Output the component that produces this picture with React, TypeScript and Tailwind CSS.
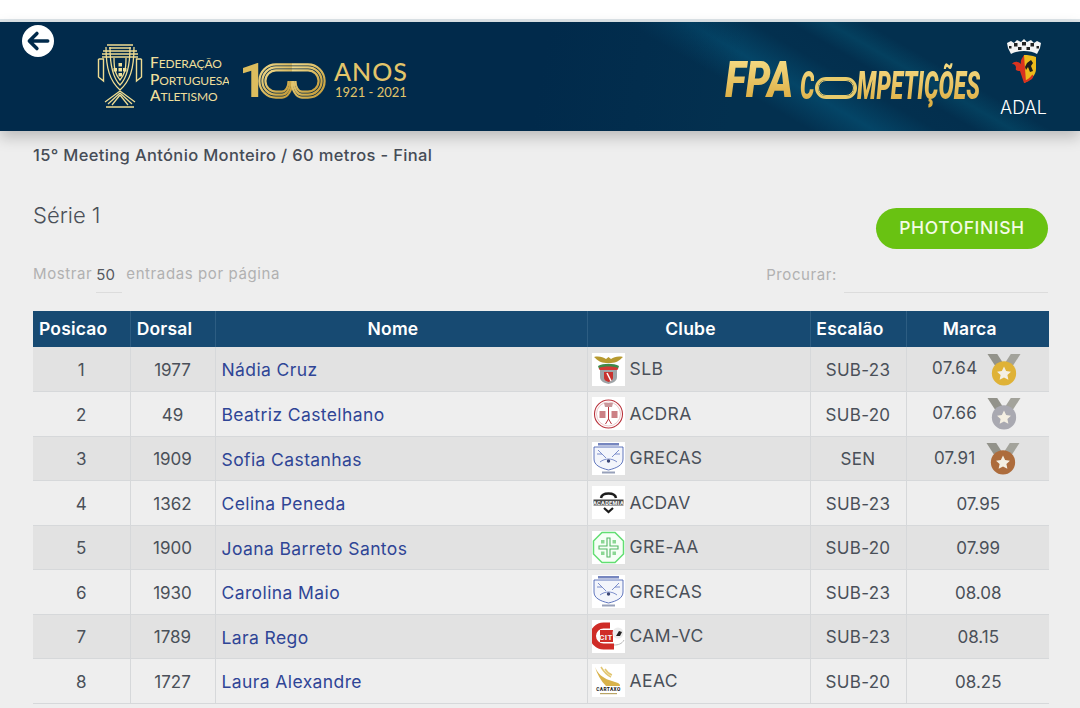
import type { ReactNode } from "react";

const FONT = "font-['Inter','Open_Sans',sans-serif]";

type MedalKind = "gold" | "silver" | "bronze";

type Row = {
  pos: number;
  dorsal: number;
  nome: string;
  clube: string;
  logo: ReactNode;
  escalao: string;
  marca: string;
  medal?: MedalKind;
};

const MEDAL_COLORS: Record<MedalKind, string> = {
  gold: "#dfb237",
  silver: "#a9a9b1",
  bronze: "#ad6c3c",
};

function Medal({ kind }: { kind: MedalKind }) {
  return (
    <svg viewBox="0 0 36 34" className="h-[33px] w-[36px]">
      <path d="M1 1h10l9 14-6 6z" fill="#93938b" />
      <path d="M35 1H25l-9 14 6 6z" fill="#a3a39b" />
      <circle cx="18" cy="21" r="12.5" fill={MEDAL_COLORS[kind]} />
      <path
        d="M18 14l2.2 4.6 5 .6-3.7 3.4 1 5L18 25.200l-4.500 2.400 1-5-3.700-3.400 5-.6z"
        fill="#f4efe2"
      />
    </svg>
  );
}

function LogoBox({ children }: { children: ReactNode }) {
  return (
    <span className="flex h-[33px] w-[33px] shrink-0 items-center justify-center bg-white">
      <svg viewBox="0 0 33 33" className="h-[33px] w-[33px]">
        {children}
      </svg>
    </span>
  );
}

const SlbLogo = (
  <LogoBox>
    <path d="M2 4c5-1 9 0 12 2l2.500-2 2.500 2c3-2 7-3 12-2-3 3-7 6-12 6h-5C9 10 5 7 2 4z" fill="#b79a2f" />
    <path d="M6 13c5-3 16-3 21 0l-1 3H7z" fill="#3f8a4a" />
    <path d="M7 15c5-2 14-2 19 0l-.5 2h-18z" fill="#d33a35" />
    <path d="M8 17h17v7c0 4-4 6-8.500 7C12 30 8 28 8 24z" fill="#9fa5a8" />
    <path d="M12 19h9v6c0 2-2 3-4.500 4-2.500-1-4.500-2-4.500-4z" fill="#c8322e" />
    <path d="M15 20l4 8" stroke="#fff" strokeWidth="1.500" />
  </LogoBox>
);

const AcdraLogo = (
  <LogoBox>
    <circle cx="16.500" cy="17" r="14" fill="#fff" stroke="#b9333c" strokeWidth="1.100" />
    <circle cx="16.500" cy="17" r="12" fill="none" stroke="#d9a0a4" strokeWidth="0.600" />
    <path d="M12 6h9l-1 4h-7z" fill="#c9979b" />
    <rect x="7.500" y="14" width="6" height="7" fill="#cc8085" />
    <rect x="19.500" y="14" width="6" height="7" fill="#cc8085" />
    <path d="M16.500 10v12l-3 5M16.500 22l3 5" stroke="#b9333c" strokeWidth="1" fill="none" />
  </LogoBox>
);

const GrecasLogo = (
  <LogoBox>
    <rect x="6" y="1" width="21" height="2.500" fill="#7686bf" />
    <path d="M2 5h29v12c0 6-6 9-14.500 11C8 26 2 23 2 17z" fill="#f3f5fb" stroke="#3a55ad" strokeWidth="0.800" />
    <path d="M6 8l8 8M27 8l-7 7M8 20c5-4 12-4 17 0M5 12h5M23 12h5" stroke="#6f83c6" strokeWidth="0.900" fill="none" />
    <circle cx="16.500" cy="19" r="1.700" fill="#3b4675" />
    <rect x="10" y="29.500" width="13" height="2" fill="#98a1ba" />
  </LogoBox>
);

const AcdavLogo = (
  <LogoBox>
    <path d="M9 12c1-6 14-6 15 0" stroke="#1c1c1c" strokeWidth="2.500" fill="none" />
    <rect x="1.500" y="13.500" width="30" height="6" fill="#4a4a4a" />
    <text x="16.500" y="18.500" textAnchor="middle" fontSize="5.500" fontWeight="800" fill="#f2f2f2" fontFamily="Roboto, sans-serif">
      ACADEMIA
    </text>
    <path d="M12 22l4.500 4 4.500-4" stroke="#1c1c1c" strokeWidth="2.200" fill="none" />
  </LogoBox>
);

const GreLogo = (
  <LogoBox>
    <path d="M10 1.500h13l8.500 8.500v13L23 31.500H10L1.500 23V10z" fill="#f6fff6" stroke="#62de72" strokeWidth="1.500" />
    <path d="M15 7h3v8h8v3h-8v8h-3v-8H7v-3h8z" fill="none" stroke="#55b765" strokeWidth="1.100" />
    <rect x="9" y="9" width="3.500" height="3.500" fill="#8bd894" />
    <rect x="20.500" y="9" width="3.500" height="3.500" fill="#8bd894" />
    <rect x="9" y="20.500" width="3.500" height="3.500" fill="#8bd894" />
    <rect x="20.500" y="20.500" width="3.500" height="3.500" fill="#8bd894" />
  </LogoBox>
);

const CamLogo = (
  <LogoBox>
    <path d="M18 5.500H11.500a10.500 10.500 0 0 0 0 21H22" fill="none" stroke="#cf2c27" strokeWidth="6" />
    <rect x="8" y="10" width="13" height="12" fill="#cf2c27" />
    <text x="14" y="20" textAnchor="middle" fontSize="8" fontWeight="700" fill="#f5f5f5" fontFamily="Roboto, sans-serif">
      CIT
    </text>
    <circle cx="26" cy="13" r="5.500" fill="#ececec" />
    <path d="M24 16l3-5 3 1-2 4z" fill="#222" />
    <path d="M22 25c4 0 8-1 10-5" stroke="#bbb" strokeWidth="1" fill="none" />
  </LogoBox>
);

const AeacLogo = (
  <LogoBox>
    <path d="M3 3c3 7 8 11 14 13l9 3c2 1 3 3 1 3H14C9 17 5 10 3 3z" fill="#d9b24a" />
    <path d="M9 3c3 5 6 8 10 10M13 5c2 3 4 5 7 6" stroke="#e2c672" strokeWidth="1.500" fill="none" />
    <text x="16.500" y="27" textAnchor="middle" fontSize="4.800" fontWeight="800" fill="#222" fontFamily="Roboto, sans-serif">
      CARTAXO
    </text>
    <rect x="8" y="29" width="17" height="1.200" fill="#b9a465" />
  </LogoBox>
);

const ROWS: Row[] = [
  { pos: 1, dorsal: 1977, nome: "Nádia Cruz", clube: "SLB", logo: SlbLogo, escalao: "SUB-23", marca: "07.64", medal: "gold" },
  { pos: 2, dorsal: 49, nome: "Beatriz Castelhano", clube: "ACDRA", logo: AcdraLogo, escalao: "SUB-20", marca: "07.66", medal: "silver" },
  { pos: 3, dorsal: 1909, nome: "Sofia Castanhas", clube: "GRECAS", logo: GrecasLogo, escalao: "SEN", marca: "07.91", medal: "bronze" },
  { pos: 4, dorsal: 1362, nome: "Celina Peneda", clube: "ACDAV", logo: AcdavLogo, escalao: "SUB-23", marca: "07.95" },
  { pos: 5, dorsal: 1900, nome: "Joana Barreto Santos", clube: "GRE-AA", logo: GreLogo, escalao: "SUB-20", marca: "07.99" },
  { pos: 6, dorsal: 1930, nome: "Carolina Maio", clube: "GRECAS", logo: GrecasLogo, escalao: "SUB-23", marca: "08.08" },
  { pos: 7, dorsal: 1789, nome: "Lara Rego", clube: "CAM-VC", logo: CamLogo, escalao: "SUB-23", marca: "08.15" },
  { pos: 8, dorsal: 1727, nome: "Laura Alexandre", clube: "AEAC", logo: AeacLogo, escalao: "SUB-20", marca: "08.25" },
];

function Goblet() {
  return (
    <svg viewBox="0 0 46 64" className="h-[64px] w-[46px]" fill="none" stroke="#efdc92">
      <path d="M10 1h26M12 4h22M6 7h34M5 10h36M5 13h36" strokeWidth="1.300" />
      <path d="M1.500 15v18l5 4V15h-5M44.500 15v18l-5 4V15h5" strokeWidth="1.400" />
      <path d="M9 3c0 22 4 34 14 43C33 37 37 25 37 3M13 3c0 20 3 31 10 38 7-7 10-18 10-38M17 14c0 13 2 17 6 22 4-5 6-9 6-22" strokeWidth="1.300" />
      <path d="M21.500 19h3.500v3.500h-3.500zM16.500 24h3.500v3.500h-3.500zM26 24h3.500v3.500H26zM21.500 24h3.500v3.500h-3.500zM21.500 29h3.500v3.500h-3.500z" fill="#f1e29b" stroke="none" />
      <path d="M23 47L8 58M23 47l15 11M23 49L11 60M23 49l12 11M23 51l-8 10M23 51l8 10M9 63h28" strokeWidth="1.300" />
    </svg>
  );
}

const RING_RADII = [16.6, 13.6, 10.6];

function HundredRings() {
  return (
    <svg viewBox="0 0 68 36" className="h-[36px] w-[68px]" fill="none">
      <defs>
        <linearGradient id="gold100" x1="0" x2="1" y1="0" y2="1">
          <stop offset="0" stopColor="#f0d98a" />
          <stop offset="1" stopColor="#c49a35" />
        </linearGradient>
      </defs>
      <g stroke="url(#gold100)" strokeWidth="2.200">
        {RING_RADII.map((r) => (
          <g key={r}>
            <path d={`M34 ${18 - r}H18A${r} ${r} 0 0 0 18 ${18 + r}H24A${r * 0.62} ${r} 0 0 0 ${24 + r * 0.62} 18`} />
            <path d={`M34 ${18 - r}H50A${r} ${r} 0 0 1 50 ${18 + r}H44A${r * 0.62} ${r} 0 0 1 ${44 - r * 0.62} 18`} />
          </g>
        ))}
      </g>
    </svg>
  );
}

function AdalCrest() {
  return (
    <svg viewBox="0 0 36 44" className="h-[44px] w-[36px]">
      <path d="M1 4l4-2 3 2 3-3 4 2 3-3 3 3 4-2 3 3 3-2 4 2-1 5-3 6c-3-2-8-3-13-3s-10 1-13 3L2 9z" fill="#f4f4f4" />
      <path d="M8 4h3.500v3.500H8zM16 3h4v3.500h-4zM24.500 4H28v3.500h-3.500zM3 7h2.500v2.500H3zM12 8h3.500v3H12zM20.500 8H24v3h-3.500zM30.500 7H33v2.500h-2.500z" fill="#222" />
      <path d="M18 16c4 0 8 .6 12 2v12c0 6-5 11-12 14z" fill="#edbb1c" />
      <path d="M18 16c-1.500 3-4 5-3 9-3-3-7-3-9 0 3 0 4 2 4 4-1 2 1 3 4 3l4 12c1-1 2-1 2-1z" fill="#d9331f" />
      <path d="M26 40c-3 2-5 3-8 4v-2c3-1 6-3 8-6 2-1 1 3 0 4z" fill="#d9331f" />
      <path d="M21 24l4-3 2 3-2 3 2 5-3 1-2-5-2 3-1-3z" fill="#1d1d1d" />
    </svg>
  );
}

function FpaLogo() {
  return (
    <div className="flex items-center text-[#efdf9b]">
      <Goblet />
      <div className="mt-[6px] ml-[7px] flex w-[79px] flex-col font-['Lato',sans-serif] text-[12px] leading-[16.500px] tracking-[-0.1px] whitespace-nowrap">
        <span className="flex h-[16.500px] items-baseline overflow-hidden"><span className="text-[15.500px] leading-[16.500px] font-medium">F</span><span>EDERAÇÃO</span></span>
        <span className="flex h-[16.500px] items-baseline overflow-hidden"><span className="text-[15.500px] leading-[16.500px] font-medium">P</span><span>ORTUGUESA</span></span>
        <span className="flex h-[16.500px] items-baseline overflow-hidden"><span className="text-[15.500px] leading-[16.500px] font-medium">A</span><span>TLETISMO</span></span>
      </div>
      <div className="mt-[10px] ml-[10px] flex items-center">
        <span className="mr-[1px] w-[18px] font-['Roboto',sans-serif] text-[49px] leading-[36px] font-bold text-[#dcbd5e]">1</span>
        <HundredRings />
      </div>
      <div className="mt-[6px] ml-[8px] flex flex-col items-center">
        <span className="font-['Lato',sans-serif] text-[25px] leading-[26px] font-medium tracking-[1px] text-[#e3c56a]">ANOS</span>
        <span className="font-['Lato',sans-serif] text-[13px] leading-[16px] text-[#e3c56a]">1921 - 2021</span>
      </div>
    </div>
  );
}

function CompeticoesLogo() {
  return (
    <div className="flex items-end font-['Roboto',sans-serif] italic">
      <span className="w-[67px]">
        <span className="inline-block origin-left scale-x-[0.8] bg-gradient-to-b from-[#f6dc84] to-[#d9a93a] bg-clip-text text-[49px] leading-[46px] font-black text-transparent">
          FPA
        </span>
      </span>
      <span className="mb-[-5px] ml-[8px] w-[14px]">
        <span className="inline-block origin-left scale-x-[0.6] bg-gradient-to-b from-[#f6dc84] to-[#d9a93a] bg-clip-text text-[38px] leading-[46px] font-black text-transparent">
          C
        </span>
      </span>
      <span className="mb-[5px] ml-[1px] block h-[22px] w-[42px] shrink-0 rounded-full border-[3px] border-[#e8cb6c]">
        <span className="block h-full w-full rounded-full border border-[#e8cb6c]" />
      </span>
      <span className="mb-[-5px] w-[124px]">
        <span className="inline-block origin-left scale-x-[0.6] bg-gradient-to-b from-[#f6dc84] to-[#d9a93a] bg-clip-text text-[38px] leading-[46px] font-black whitespace-nowrap text-transparent">
          MPETIÇÕES
        </span>
      </span>
    </div>
  );
}

const TH = "border-r border-[#2d5d82] pr-[16px] text-[17.500px] font-semibold tracking-[0.2px] last:border-r-0";
const TD = "border-r border-b border-[#d6d8da] last:border-r-0";

export default function App() {
  return (
    <div className={`h-[708px] w-[1080px] overflow-hidden bg-[#eeeeee] ${FONT}`}>
      <div className="h-[19px] bg-white" />
      <div className="h-[3px] bg-[#dfe6ea]" />
      <header className="flex h-[109px] bg-[linear-gradient(100deg,#012a4b_0%,#012a4b_50%,transparent_68%),linear-gradient(30deg,#03304f_0%,#03304f_64%,#044567_69%,#03304f_74%,#032f4e_77%,#04405f_80%,#03304f_83%,#03304f_100%)] pr-[33px] pl-[22px] shadow-[0_6px_14px_rgba(0,0,0,0.22)]">
        <button className="mt-[3px] flex h-[32px] w-[32px] shrink-0 items-center justify-center rounded-full bg-white">
          <svg viewBox="0 0 24 24" className="h-[26px] w-[26px]" fill="none" stroke="#012a4b" strokeWidth="3.200" strokeLinecap="round" strokeLinejoin="round">
            <path d="M21 12H5M11 5l-7 7 7 7" />
          </svg>
        </button>
        <div className="mt-[22px] ml-[43px] self-start">
          <FpaLogo />
        </div>
        <div className="mt-[36px] ml-auto self-start">
          <CompeticoesLogo />
        </div>
        <div className="ml-[19px] flex w-[47px] flex-col items-center">
          <div className="mt-[17px] h-[44px]">
            <AdalCrest />
          </div>
          <span className="mt-[14px] text-[18px] leading-[22px] font-light text-white">ADAL</span>
        </div>
      </header>

      <main className="px-[33px]">
        <p className="mt-[13px] text-[16.500px] leading-[22px] font-medium tracking-[0.35px] text-[#464c56]">
          15° Meeting António Monteiro / 60 metros - Final
        </p>

        <div className="mt-[26px] flex items-start justify-between">
          <h2 className="mt-[9px] text-[22px] leading-[28px] font-light text-[#4a5058]">Série 1</h2>
          <button className="mt-[16px] mr-[-1px] h-[41px] w-[172px] rounded-full bg-[#69c212] text-[17.500px] font-medium tracking-[0.6px] text-[#f3fbe6]">
            PHOTOFINISH
          </button>
        </div>

        <div className="mt-[9px] mr-[-1px] flex h-[35px] text-[15px] tracking-[0.6px] text-[#b1b1b1]">
          <span className="mt-[6px] leading-[20px]">Mostrar</span>
          <span className="ml-[4px] h-[35px] w-[26px] border-b border-[#dcdcdc] pt-[7px] leading-[20px] tracking-normal text-[#55595f]">50</span>
          <span className="mt-[6px] ml-[4px] leading-[20px]">entradas por página</span>
          <span className="mt-[7px] ml-auto leading-[20px]">Procurar:</span>
          <span className="ml-[7px] h-[35px] w-[204px] border-b border-[#dcdcdc]" />
        </div>

        <table className="mt-[18px] w-[1016px] table-fixed border-collapse text-center text-[17px] text-[#4a5059]">
          <thead>
            <tr className="h-[36px] bg-[#174a72] text-white">
              <th className={`w-[97px] ${TH}`}>Posicao</th>
              <th className={`w-[85px] ${TH}`}>Dorsal</th>
              <th className={`w-[372px] ${TH}`}>Nome</th>
              <th className={`w-[223px] ${TH}`}>Clube</th>
              <th className={`w-[96px] ${TH}`}>Escalão</th>
              <th className={`w-[143px] ${TH}`}>Marca</th>
            </tr>
          </thead>
          <tbody>
            {ROWS.map((row) => (
              <tr key={row.pos} className="h-[44.500px] odd:bg-[#e2e2e2] even:bg-[#eeeeee]">
                <td className={`${TD} pt-[3px]`}>{row.pos}</td>
                <td className={`${TD} pt-[3px]`}>{row.dorsal}</td>
                <td className={`${TD} pt-[3px] pl-[6px] text-left text-[17.500px] tracking-[0.4px] text-[#2f4596]`}>{row.nome}</td>
                <td className={TD}>
                  <div className="flex items-center gap-[5px] pl-[4px] text-left text-[17.500px] tracking-[0.4px]">
                    {row.logo}
                    <span>{row.clube}</span>
                  </div>
                </td>
                <td className={`${TD} pt-[3px] tracking-[0.3px]`}>{row.escalao}</td>
                <td className={TD}>
                  {row.medal ? (
                    <div className="flex items-center justify-center gap-[9px] pr-[1px]">
                      <span className="tracking-[0.3px]">{row.marca}</span>
                      <Medal kind={row.medal} />
                    </div>
                  ) : (
                    <span className="block pt-[3px] pl-[1px]">{row.marca}</span>
                  )}
                </td>
              </tr>
            ))}
          </tbody>
        </table>
      </main>
    </div>
  );
}
